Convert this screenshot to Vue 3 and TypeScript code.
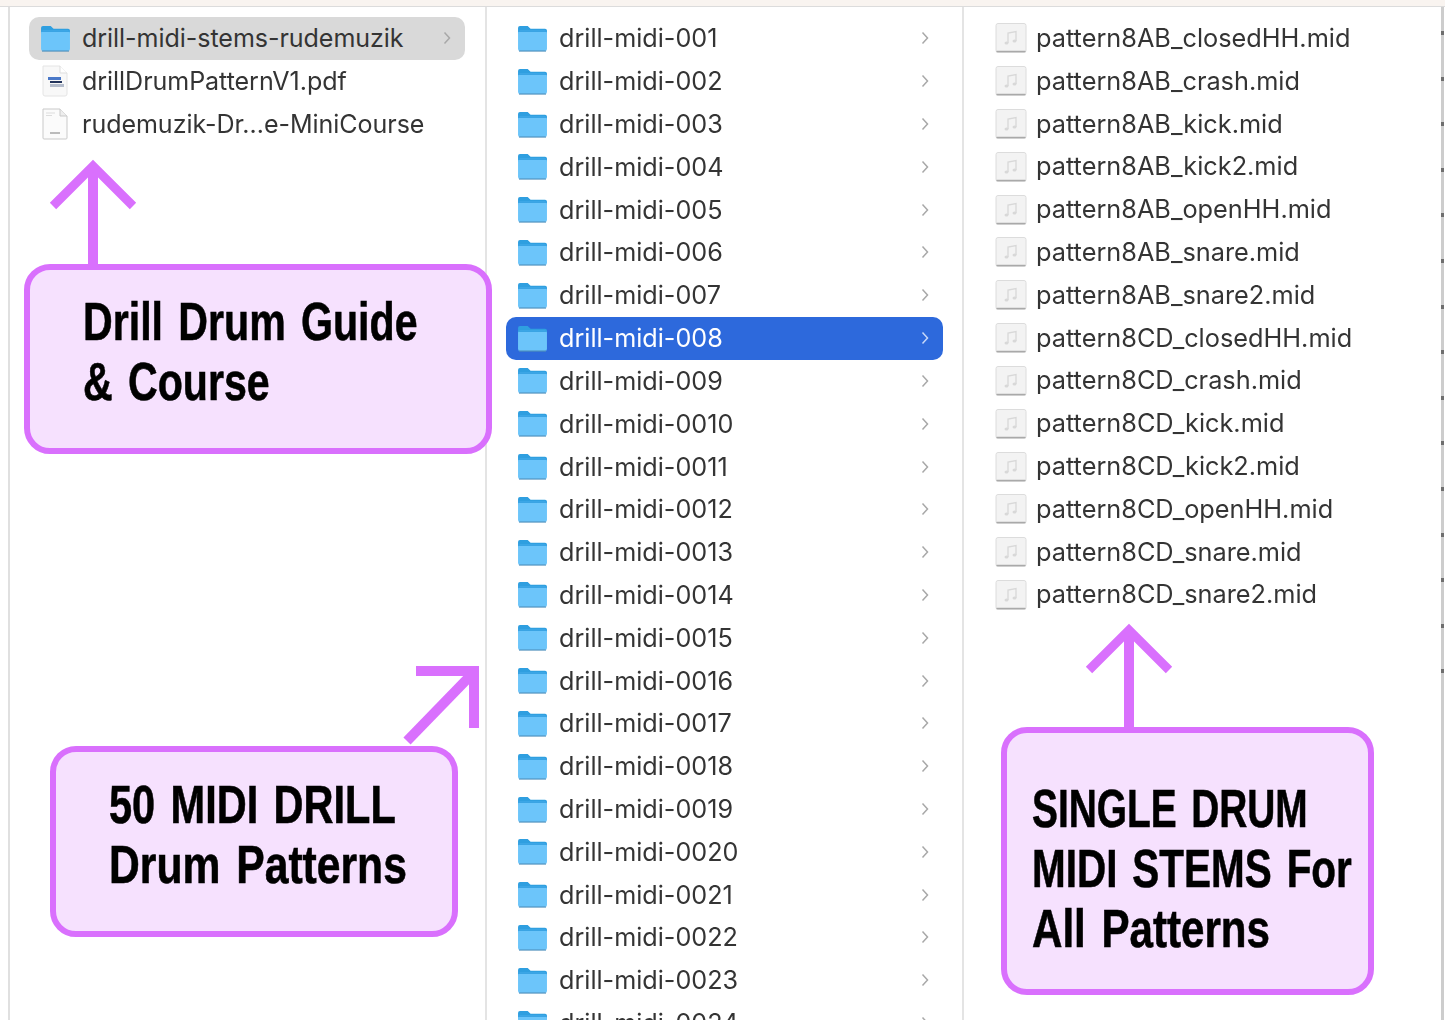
<script setup lang="ts">
const col2: string[] = [];
for (let i = 1; i <= 24; i++) {
  col2.push(`drill-midi-00${i}`);
}
const parts = ['closedHH', 'crash', 'kick', 'kick2', 'openHH', 'snare', 'snare2'];
const col3: string[] = [];
for (const g of ['8AB', '8CD']) {
  for (const p of parts) col3.push(`pattern${g}_${p}.mid`);
}
col2.splice(0, 9, ...Array.from({ length: 9 }, (_, i) => `drill-midi-00${i + 1}`));
</script>

<template>
  <div class="page">
    <div class="topbar"></div>
    <div class="finder">
      <section class="col col1">
        <div class="row grey">
          <svg class="ficon" viewBox="0 0 32 28"><use href="#folder" /></svg>
          <span class="name">drill-midi-stems-rudemuzik</span>
          <svg class="chev" viewBox="0 0 8 14"><path d="M1.5 1.5 6.5 7l-5 5.5" /></svg>
        </div>
        <div class="row">
          <svg class="ficon doc" viewBox="0 0 32 32">
            <path d="M4 1h17l7 7v21a2 2 0 0 1-2 2H6a2 2 0 0 1-2-2z" fill="#f8f8f8" stroke="#e4e4e4" />
            <path d="M21 1v7h7" fill="#fff" stroke="#ddd" />
            <path d="M9 12h13v3H9z" fill="#4a78c8" />
            <path d="M11 16h12v2H11z" fill="#22345c" />
            <path d="M11 19h14v3H11z" fill="#b4bccb" />
          </svg>
          <span class="name">drillDrumPatternV1.pdf</span>
        </div>
        <div class="row">
          <svg class="ficon doc" viewBox="0 0 32 32">
            <path d="M4 1h17l7 7v22a1 1 0 0 1-1 1H5a1 1 0 0 1-1-1z" fill="#fbfbfb" stroke="#c9c9c9" />
            <path d="M21 1v7h7" fill="#eee" stroke="#c9c9c9" />
            <path d="M7 5h9M7 7.500h6" stroke="#ddd" />
            <path d="M11 25h10" stroke="#bbb" stroke-width="2" />
          </svg>
          <span class="name">rudemuzik-Dr…e-MiniCourse</span>
        </div>
      </section>

      <section class="col col2">
        <div v-for="n in col2" :key="n" class="row" :class="{ blue: n === 'drill-midi-008' }">
          <svg class="ficon" viewBox="0 0 32 28"><use href="#folder" /></svg>
          <span class="name">{{ n }}</span>
          <svg class="chev" viewBox="0 0 8 14"><path d="M1.5 1.5 6.5 7l-5 5.5" /></svg>
        </div>
      </section>

      <section class="col col3">
        <div v-for="n in col3" :key="n" class="row">
          <svg class="ficon mid" viewBox="0 0 32 32">
            <rect x="1" y="1.500" width="30" height="29" rx="2" fill="#f3f3f3" stroke="#dcdcdc" />
            <path d="M1.500 29.500h29" stroke="#a9a9a9" stroke-width="1.500" />
            <path d="M13 21V11l8-1.500V19" fill="none" stroke="#d8d8d8" stroke-width="1.300" />
            <ellipse cx="11.500" cy="21" rx="2" ry="1.500" fill="#d8d8d8" />
            <ellipse cx="19.500" cy="19" rx="2" ry="1.500" fill="#d8d8d8" />
          </svg>
          <span class="name">{{ n }}</span>
        </div>
      </section>
    </div>

    <div class="ruler"></div>

    <svg class="defs" width="0" height="0">
      <symbol id="folder" viewBox="0 0 32 28">
        <path d="M1 5V3a2 2 0 0 1 2-2h8l3 3h15a2 2 0 0 1 2 2v3H1z" fill="#2f9fe0" />
        <rect x="1" y="6" width="30" height="21" rx="2" fill="#6cc5fa" />
        <path d="M1 6.500h30" stroke="#3aa4e4" stroke-width="1.500" />
        <path d="M2 27h28" stroke="#4f90bd" stroke-width="1.200" />
      </symbol>
    </svg>

    <svg class="arrows" width="1445" height="1022" viewBox="0 0 1445 1022">
      <g fill="none" stroke="#d970fd">
        <path d="M93 266V170" stroke-width="10" />
        <path d="M53 206 93 166l40 40" stroke-width="9" />
        <path d="M1129 729V633" stroke-width="10" />
        <path d="M1089 670l40-40 40 40" stroke-width="9" />
        <path d="M407 741 474 672" stroke-width="10" />
        <path d="M416 671H474V728" stroke-width="10" />
      </g>
    </svg>

    <div class="callout c1"><p class="s76">Drill Drum Guide</p><p class="s76">&amp; Course</p></div>
    <div class="callout c2"><p class="s77">50 MIDI DRILL</p><p class="s79">Drum Patterns</p></div>
    <div class="callout c3"><p class="s72">SINGLE DRUM</p><p class="s75">MIDI STEMS For</p><p class="s78">All Patterns</p></div>
  </div>
</template>

<style>
html, body { margin: 0; background: #fff; }
</style>

<style scoped>
.page {
  position: relative;
  width: 1445px;
  height: 1022px;
  overflow: hidden;
  background: #fff;
  display: flex;
  flex-direction: column;
}
.topbar {
  height: 6px;
  flex: none;
  background: #f9f4f0;
  border-bottom: 1px solid #dcdcdc;
}
.finder {
  flex: 1;
  min-height: 0;
  display: flex;
  margin: 0 1px 2px 8px;
  border-left: 2px solid #e0e0e0;
  border-right: 3px solid #cdcdcd;
  overflow: hidden;
}
.col {
  flex: none;
  box-sizing: border-box;
  padding-top: 10px;
  overflow: hidden;
  filter: blur(0.5px);
}
.col1 { width: 477px; padding-left: 19px; padding-right: 20px; border-right: 2px solid #e4e4e4; }
.col2 { width: 477px; padding-left: 19px; padding-right: 19px; border-right: 2px solid #e4e4e4; }
.col3 { flex: 1; padding-left: 31px; }
.row {
  height: 42.820px;
  display: flex;
  align-items: center;
  border-radius: 10px;
  color: #343434;
  font: 400 25.200px "Inter", "Liberation Sans", sans-serif;
}
.col1 .row { font-size: 25.050px; letter-spacing: -0.05px; }
.col3 .row { font-size: 25.300px; }
.col3 .name { margin-top: -2px; }
.grey { background: #d9d9d9; }
.blue { background: #2d69dc; color: #fff; }
.ficon { width: 31px; height: 27px; margin-left: 11px; margin-right: 11px; flex: none; }
.ficon.doc { width: 32px; height: 32px; margin-left: 10px; margin-right: 11px; }
.ficon.mid { width: 32px; height: 32px; margin-left: 0; margin-right: 9px; }
.name { flex: 1; white-space: nowrap; }
.chev {
  width: 8px;
  height: 14px;
  margin-right: 14px;
  fill: none;
  stroke: #a8a8a8;
  stroke-width: 1.500;
  flex: none;
}
.blue .chev { stroke: #c7d8f8; }
.ruler {
  position: absolute;
  right: 1px;
  top: 10px;
  width: 3px;
  height: 670px;
  background: repeating-linear-gradient(to bottom, #cdcdcd 0 21px, #6e6e6e 21px 25px, #cdcdcd 25px 45.600px);
}
.defs { position: absolute; }
.arrows { position: absolute; left: 0; top: 0; }
.callout {
  position: absolute;
  box-sizing: border-box;
  border: 6px solid #d970fd;
  border-radius: 26px;
  background: #f6e1fe;
  color: #000;
  font: 700 54px/60px "Liberation Sans", sans-serif;
  word-spacing: 5px;
  -webkit-text-stroke: 0.6px #000;
}
.callout p { margin: 0; white-space: nowrap; width: fit-content; transform-origin: left center; }
.s72 { transform: scaleX(0.72); }
.s75 { transform: scaleX(0.749); }
.s76 { transform: scaleX(0.762); }
.s77 { transform: scaleX(0.769); }
.s78 { transform: scaleX(0.78); }
.s79 { transform: scaleX(0.79); }
.c1 { left: 24px; top: 264px; width: 468px; height: 190px; padding: 21px 0 0 53px; }
.c2 { left: 50px; top: 746px; width: 408px; height: 191px; padding: 22px 0 0 53px; }
.c3 { left: 1001px; top: 727px; width: 373px; height: 268px; padding: 45px 0 0 25px; }
</style>
